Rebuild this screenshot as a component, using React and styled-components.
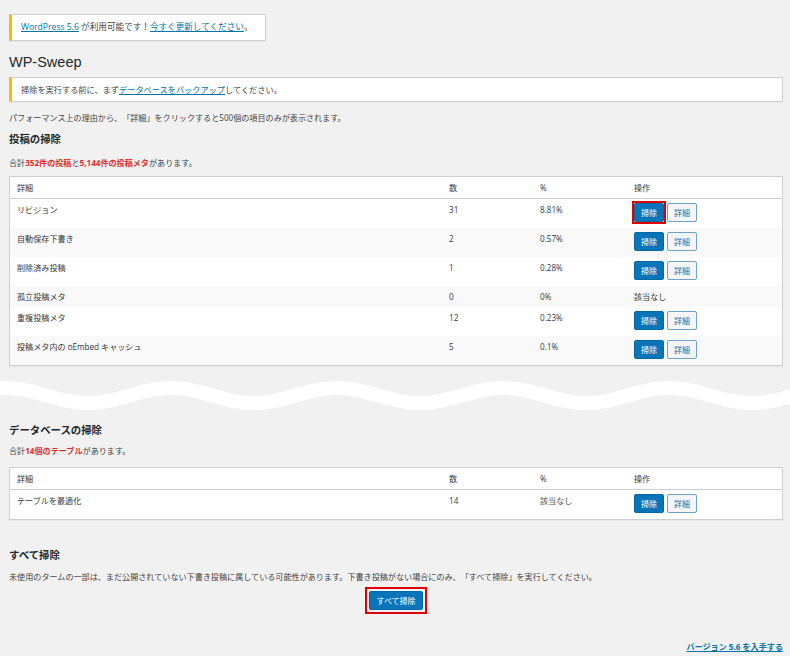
import React from "react";
import styled, { createGlobalStyle } from "styled-components";

const GlobalStyle = createGlobalStyle`
  html, body { margin: 0; padding: 0; background: #f1f1f1; }
  body {
    font-family: "Open Sans", "Noto Sans CJK JP", sans-serif;
    font-size: 8.1px;
    line-height: 13px;
    color: #444;
    text-spacing-trim: space-all;
  }
`;

const Page = styled.div`
  width: 790px;
  min-height: 656px;
  padding-top: 14px;
  box-sizing: border-box;
`;

const Section = styled.div`
  padding: 0 7px 0 9px;
`;

const Notice = styled.div`
  width: ${(p) => (p.$fit ? "fit-content" : "auto")};
  box-sizing: border-box;
  background: #fff;
  border: 1px solid #ccd0d4;
  border-left: 3px solid #ffb900;
  box-shadow: 0 1px 1px rgba(0, 0, 0, 0.04);
  font-size: ${(p) => (p.$fit ? "8.6px" : "8.2px")};
  padding: ${(p) => (p.$fit ? "6px 12px 6px 9px" : "5px 9px")};
  margin-top: ${(p) => p.$mt || 0}px;
`;

const Link = styled.a`
  color: #0073aa;
  text-decoration: underline;
  font-weight: ${(p) => (p.$bold ? 700 : 400)};
`;

const Title = styled.h1`
  margin: 12px 0 0;
  font-family: "Liberation Sans", "Noto Sans CJK JP", sans-serif;
  font-size: 14.5px;
  line-height: 18px;
  font-weight: 400;
  color: #23282d;
`;

const Heading = styled.h2`
  margin: ${(p) => p.$mt}px 0 0;
  font-size: 10.4px;
  line-height: 14px;
  font-weight: 700;
  color: #23282d;
`;

const Para = styled.p`
  margin: ${(p) => p.$mt}px 0 0;
`;

const Count = styled.strong`
  color: #dc3232;
  font-weight: 700;
`;

const Table = styled.table`
  width: 774px;
  table-layout: fixed;
  border-collapse: separate;
  border-spacing: 0;
  background: #fff;
  border: 1px solid #ccd0d4;
  box-shadow: 0 1px 1px rgba(0, 0, 0, 0.04);
  margin-top: ${(p) => p.$mt}px;
`;

const Th = styled.th`
  text-align: left;
  font-weight: 400;
  color: #32373c;
  padding: 4px 7px;
  border-bottom: 1px solid #ccd0d4;
  line-height: 13px;
`;

const Row = styled.tr`
  background: ${(p) => (p.$alt ? "#f9f9f9" : "#fff")};
`;

const Td = styled.td`
  padding: 4px 7px;
  vertical-align: top;
  line-height: 13px;
  color: ${(p) => (p.$muted ? "#555" : "#32373c")};
`;

const Actions = styled.div`
  display: flex;
  gap: 3px;
  padding-bottom: 2px;
`;

const Button = styled.button`
  position: relative;
  display: inline-flex;
  align-items: center;
  justify-content: center;
  height: 19px;
  box-sizing: border-box;
  padding: 0 6px;
  margin: 0;
  font-family: inherit;
  font-size: 8px;
  line-height: 1;
  border-radius: 2px;
  cursor: pointer;
  border: 1px solid ${(p) => (p.$primary ? "#0069a6" : "#6fa2c8")};
  background: ${(p) => (p.$primary ? "#0a74b8" : "#f3f5f6")};
  color: ${(p) => (p.$primary ? "#fff" : "#2271a8")};

  &::after {
    content: "";
    display: ${(p) => (p.$marked ? "block" : "none")};
    position: absolute;
    inset: -${(p) => p.$inset || 3}px;
    border: 2px solid #e00000;
    pointer-events: none;
  }
`;

const WaveSvg = styled.svg`
  display: block;
  width: 790px;
  height: 40px;
  margin-top: 8px;
`;

const Center = styled.div`
  display: flex;
  justify-content: center;
  margin-top: 8px;
`;

const Footer = styled.div`
  display: flex;
  justify-content: flex-end;
  margin-top: 30px;
`;

function Wave() {
  const pts = [];
  for (let x = -4; x <= 794; x += 2) {
    const y = 21.5 - 7.5 * Math.cos((2 * Math.PI * (x - 5)) / 166);
    pts.push(`${x},${y.toFixed(2)}`);
  }
  return (
    <WaveSvg viewBox="0 0 790 40" aria-hidden="true">
      <polyline points={pts.join(" ")} fill="none" stroke="#fff" strokeWidth="14" />
    </WaveSvg>
  );
}

const COLS = [432, 91, 94, 155];

function CleanTable({ rows, mt }) {
  return (
    <Table $mt={mt}>
      <colgroup>
        {COLS.map((w, i) => (
          <col key={i} style={{ width: w }} />
        ))}
      </colgroup>
      <thead>
        <tr>
          <Th>詳細</Th>
          <Th>数</Th>
          <Th>%</Th>
          <Th>操作</Th>
        </tr>
      </thead>
      <tbody>
        {rows.map((r, i) => (
          <Row key={r.name} $alt={i % 2 === 1}>
            <Td>{r.name}</Td>
            <Td>{r.count}</Td>
            <Td $muted={r.pct === "該当なし"}>{r.pct}</Td>
            <Td>
              {r.none ? (
                <span>該当なし</span>
              ) : (
                <Actions>
                  <Button $primary $marked={r.marked}>掃除</Button>
                  <Button>詳細</Button>
                </Actions>
              )}
            </Td>
          </Row>
        ))}
      </tbody>
    </Table>
  );
}

const postRows = [
  { name: "リビジョン", count: "31", pct: "8.81%", marked: true },
  { name: "自動保存下書き", count: "2", pct: "0.57%" },
  { name: "削除済み投稿", count: "1", pct: "0.28%" },
  { name: "孤立投稿メタ", count: "0", pct: "0%", none: true },
  { name: "重複投稿メタ", count: "12", pct: "0.23%" },
  { name: "投稿メタ内の oEmbed キャッシュ", count: "5", pct: "0.1%" },
];

const dbRows = [{ name: "テーブルを最適化", count: "14", pct: "該当なし" }];

export default function App() {
  return (
    <Page>
      <GlobalStyle />
      <Section>
        <Notice $fit>
          <Link href="#">WordPress 5.6</Link> が利用可能です！
          <Link href="#">今すぐ更新してください</Link>。
        </Notice>
        <Title>WP-Sweep</Title>
        <Notice $mt={6}>
          掃除を実行する前に、まず<Link href="#">データベースをバックアップ</Link>してください。
        </Notice>
        <Para $mt={9}>
          パフォーマンス上の理由から、「詳細」をクリックすると500個の項目のみが表示されます。
        </Para>
        <Heading $mt={8}>投稿の掃除</Heading>
        <Para $mt={10}>
          合計<Count>352件の投稿</Count>と<Count>5,144件の投稿メタ</Count>があります。
        </Para>
        <CleanTable rows={postRows} mt={7} />
      </Section>
      <Wave />
      <Section>
        <Heading $mt={9}>データベースの掃除</Heading>
        <Para $mt={7}>
          合計<Count>14個のテーブル</Count>があります。
        </Para>
        <CleanTable rows={dbRows} mt={10} />
        <Heading $mt={28}>すべて掃除</Heading>
        <Para $mt={8}>
          未使用のタームの一部は、まだ公開されていない下書き投稿に属している可能性があります。下書き投稿がない場合にのみ、「すべて掃除」を実行してください。
        </Para>
        <Center>
          <Button $primary $marked $inset={5}>すべて掃除</Button>
        </Center>
        <Footer>
          <Link href="#" $bold>バージョン 5.6 を入手する</Link>
        </Footer>
      </Section>
    </Page>
  );
}
